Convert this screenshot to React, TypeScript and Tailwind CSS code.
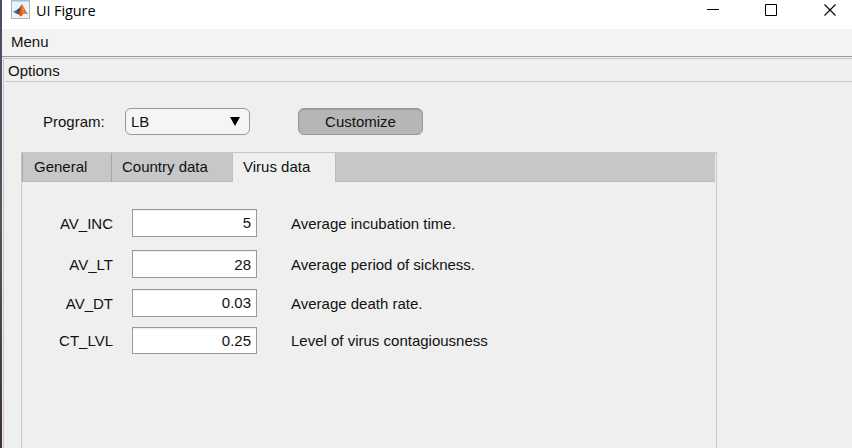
import React from "react";

const rows = [
  { name: "AV_INC", value: "5", text: "Average incubation time.", box: "h-[28px]", gap: "mb-[13px]", shift: "pt-px", pad: "pb-[2px]" },
  { name: "AV_LT", value: "28", text: "Average period of sickness.", box: "h-[28px]", gap: "mb-[11px]", shift: "pt-px", pad: "" },
  { name: "AV_DT", value: "0.03", text: "Average death rate.", box: "h-[28px]", gap: "mb-[10px]", shift: "pt-px", pad: "pb-[2px]" },
  { name: "CT_LVL", value: "0.25", text: "Level of virus contagiousness", box: "h-[27px]", gap: "", shift: "", pad: "" },
];

function Logo() {
  return (
    <svg width="19" height="20" viewBox="0 0 19 20" className="shrink-0">
      <defs>
        <linearGradient id="flame" x1="0" y1="0" x2="1" y2="0">
          <stop offset="0" stopColor="#5c2a28" />
          <stop offset="0.35" stopColor="#d9531e" />
          <stop offset="0.6" stopColor="#f0882c" />
          <stop offset="1" stopColor="#a32a1a" />
        </linearGradient>
      </defs>
      <rect x="0.5" y="-2" width="18" height="20.5" fill="#eef2f6" stroke="#a9b7c4" />
      <rect x="1" y="0" width="17" height="1.5" fill="#9dc0dc" />
      <path d="M2 11.8 L6.5 9.5 L8.5 11 L5.5 13.7 Z" fill="#3b7dba" />
      <path d="M6.2 9.6 Q9 8 10.5 4.5 L9.5 10 L8 13 L5.5 13.7 Z" fill="#27507f" />
      <path d="M10.6 4 Q12.3 5 13.5 8.6 Q14.8 12.3 17 14.2 Q14.2 12.8 12.3 14 Q11 16.3 9.3 16.5 Q8.3 13.5 5.5 13.7 Q9.5 11 10.6 4 Z" fill="url(#flame)" />
    </svg>
  );
}

export default function App() {
  return (
    <div className="flex h-[448px] w-[852px] overflow-hidden bg-[#efefef] font-['Liberation_Sans',Arial,sans-serif] text-[15px] leading-[18px] text-[#111]">
      <div className="w-[2px] shrink-0 bg-gradient-to-b from-[#4b4b62] via-[#55525f] to-[#40302c]" />
      <div className="flex min-w-0 flex-1 flex-col">
        <header className="flex h-[29px] shrink-0 items-start bg-white pl-[9px]">
          <Logo />
          <span className="ml-[6px] mt-px font-['Open_Sans',sans-serif] text-[14.5px] leading-[20px] tracking-[-0.1px] text-black">UI Figure</span>
          <svg width="131" height="20" viewBox="0 0 131 20" className="ml-auto mr-[14px]" fill="none" stroke="#000">
            <path d="M0 9.5H12" />
            <path d="M58.5 4.5h11v11h-11z" />
            <path d="M117.5 4.5l11 11M128.5 4.5l-11 11" strokeWidth="1.1" />
          </svg>
        </header>
        <nav className="flex h-[28px] shrink-0 items-center border-b border-[#999] bg-[#f3f3f3] pb-[2px] pl-[9px]">Menu</nav>
        <section className="ml-px mt-px flex min-h-0 flex-1 flex-col border-l border-t border-[#c6c6c6]">
          <h2 className="ml-px h-[23px] shrink-0 border-b border-[#cacaca] pl-[3px] pt-[3px]">Options</h2>
          <div className="mt-[26px] flex h-[27px] shrink-0 items-center pl-[39px]">
            <span className="w-[82px]">Program:</span>
            <button className="flex h-[27px] w-[125px] items-center justify-between rounded-[6px] border border-[#999] bg-[#f5f5f5] pl-[5px] pr-[9px]">
              LB
              <svg width="10" height="9" viewBox="0 0 10 9"><path d="M0 0h10L5 9z" fill="#000" /></svg>
            </button>
            <button className="ml-[48px] h-[27px] w-[125px] rounded-[6px] border border-[#999] bg-[#b6b6b6] shadow-[inset_0_1px_1px_#999]">Customize</button>
          </div>
          <div className="ml-[17px] mt-[17px] flex w-[696px] flex-1 flex-col border-l border-r border-t border-[#c8c8c8]">
            <div className="mr-px flex h-[29px] shrink-0 bg-[#c7c7c7]">
              <div className="w-[90px] border-b border-l border-r border-b-[#bdbdbd] border-l-[#a6a6a6] border-r-[#a6a6a6] pl-[11px] pt-[5px]">General</div>
              <div className="w-[121px] border-b border-r border-b-[#bdbdbd] border-r-[#c0c0c0] pl-[10px] pt-[5px]">Country data</div>
              <div className="w-[102px] bg-[#efefef] pl-[10px] pt-[5px]">Virus data</div>
              <div className="flex-1 border-b border-l border-[#bdbdbd]" />
            </div>
            <div className="mt-[27px] flex flex-col">
              {rows.map((r) => (
                <div key={r.name} className={`flex items-center ${r.box} ${r.gap}`}>
                  <span className={`w-[91px] text-right ${r.shift}`}>{r.name}</span>
                  <input readOnly value={r.value} className={`ml-[19px] w-[125px] border border-[#999] bg-white pr-[5px] text-right shadow-[inset_0_1px_1px_#eee] outline-none ${r.box} ${r.pad}`} />
                  <span className={`ml-[34px] ${r.shift}`}>{r.text}</span>
                </div>
              ))}
            </div>
          </div>
        </section>
      </div>
    </div>
  );
}
